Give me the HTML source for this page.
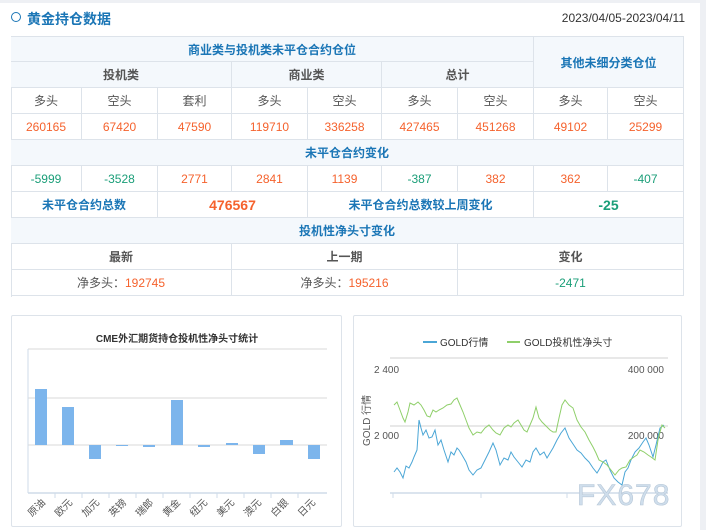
<!DOCTYPE html>
<html><head><meta charset="utf-8"><style>
*{margin:0;padding:0;box-sizing:border-box}
body{width:706px;height:530px;background:#eef0f4;position:relative;overflow:hidden;font-family:"Liberation Sans","Noto Sans CJK SC",sans-serif;font-size:12px;color:#555}
#page{position:absolute;left:0;top:3px;width:700px;height:527px;background:#fff}
.c{position:absolute;border-right:1px solid #dde3ea;border-bottom:1px solid #dde3ea;display:flex;align-items:center;justify-content:center;white-space:nowrap}
.h{background:#f4f8fc;color:#1b76b6;font-weight:bold}
.h2{background:#f4f8fc;color:#555;font-weight:bold}
.o{color:#f5622d}.g{color:#1a9e78}.b{color:#1b76b6;font-weight:bold}
.panel{position:absolute;border:1px solid #dde3ea;border-radius:2px;background:#fff}
</style></head><body>
<div id="page"></div>
<div style="position:absolute;left:11px;top:12px;width:10px;height:10px;border:1.5px solid #1b76b6;border-radius:50%"></div>
<div style="position:absolute;left:27px;top:9px;font-size:14px;font-weight:bold;color:#1b76b6">黄金持仓数据</div>
<div style="position:absolute;right:21px;top:11px;font-size:12px;color:#333">2023/04/05-2023/04/11</div>
<div style="position:absolute;left:11px;top:36px;width:673px;height:261px;border-top:1px solid #dde3ea;border-left:1px solid #dde3ea"></div>
<div class="c h" style="left:11px;top:37px;width:523px;height:25px">商业类与投机类未平仓合约仓位</div>
<div class="c h" style="left:534px;top:37px;width:150px;height:51px">其他未细分类仓位</div>
<div class="c h2" style="left:11px;top:62px;width:221px;height:26px">投机类</div>
<div class="c h2" style="left:232px;top:62px;width:150px;height:26px">商业类</div>
<div class="c h2" style="left:382px;top:62px;width:152px;height:26px">总计</div>
<div class="c" style="left:11px;top:88px;width:71px;height:26px">多头</div>
<div class="c" style="left:82px;top:88px;width:76px;height:26px">空头</div>
<div class="c" style="left:158px;top:88px;width:74px;height:26px">套利</div>
<div class="c" style="left:232px;top:88px;width:76px;height:26px">多头</div>
<div class="c" style="left:308px;top:88px;width:74px;height:26px">空头</div>
<div class="c" style="left:382px;top:88px;width:76px;height:26px">多头</div>
<div class="c" style="left:458px;top:88px;width:76px;height:26px">空头</div>
<div class="c" style="left:534px;top:88px;width:74px;height:26px">多头</div>
<div class="c" style="left:608px;top:88px;width:76px;height:26px">空头</div>
<div class="c o" style="left:11px;top:114px;width:71px;height:26px">260165</div>
<div class="c o" style="left:82px;top:114px;width:76px;height:26px">67420</div>
<div class="c o" style="left:158px;top:114px;width:74px;height:26px">47590</div>
<div class="c o" style="left:232px;top:114px;width:76px;height:26px">119710</div>
<div class="c o" style="left:308px;top:114px;width:74px;height:26px">336258</div>
<div class="c o" style="left:382px;top:114px;width:76px;height:26px">427465</div>
<div class="c o" style="left:458px;top:114px;width:76px;height:26px">451268</div>
<div class="c o" style="left:534px;top:114px;width:74px;height:26px">49102</div>
<div class="c o" style="left:608px;top:114px;width:76px;height:26px">25299</div>
<div class="c h" style="left:11px;top:140px;width:673px;height:26px">未平仓合约变化</div>
<div class="c g" style="left:11px;top:166px;width:71px;height:26px">-5999</div>
<div class="c g" style="left:82px;top:166px;width:76px;height:26px">-3528</div>
<div class="c o" style="left:158px;top:166px;width:74px;height:26px">2771</div>
<div class="c o" style="left:232px;top:166px;width:76px;height:26px">2841</div>
<div class="c o" style="left:308px;top:166px;width:74px;height:26px">1139</div>
<div class="c g" style="left:382px;top:166px;width:76px;height:26px">-387</div>
<div class="c o" style="left:458px;top:166px;width:76px;height:26px">382</div>
<div class="c o" style="left:534px;top:166px;width:74px;height:26px">362</div>
<div class="c g" style="left:608px;top:166px;width:76px;height:26px">-407</div>
<div class="c b" style="left:11px;top:192px;width:147px;height:26px">未平仓合约总数</div>
<div class="c o" style="left:158px;top:192px;width:150px;height:26px;font-size:14px;font-weight:bold">476567</div>
<div class="c b" style="left:308px;top:192px;width:226px;height:26px">未平仓合约总数较上周变化</div>
<div class="c g" style="left:534px;top:192px;width:150px;height:26px;font-size:14px;font-weight:bold">-25</div>
<div class="c h" style="left:11px;top:218px;width:673px;height:26px">投机性净头寸变化</div>
<div class="c" style="left:11px;top:244px;width:221px;height:26px;font-weight:bold">最新</div>
<div class="c" style="left:232px;top:244px;width:226px;height:26px;font-weight:bold">上一期</div>
<div class="c" style="left:458px;top:244px;width:226px;height:26px;font-weight:bold">变化</div>
<div class="c" style="left:11px;top:270px;width:221px;height:26px">净多头：<span class="o">192745</span></div>
<div class="c" style="left:232px;top:270px;width:226px;height:26px">净多头：<span class="o">195216</span></div>
<div class="c g" style="left:458px;top:270px;width:226px;height:26px">-2471</div>

<div class="panel" style="left:11px;top:315px;width:331px;height:212px"></div>
<div class="panel" style="left:353px;top:315px;width:329px;height:212px"></div>
<svg style="position:absolute;left:0;top:0" width="706" height="530" font-family="Liberation Sans,Noto Sans CJK SC,sans-serif">
<text x="177" y="342" font-size="10" font-weight="bold" fill="#333" text-anchor="middle">CME外汇期货持仓投机性净头寸统计</text>
<g stroke="#e6e6e6" stroke-width="1.5"><line x1="28" y1="349" x2="327" y2="349"/><line x1="28" y1="398" x2="327" y2="398"/><line x1="28" y1="445" x2="327" y2="445"/></g>
<line x1="28" y1="349" x2="28" y2="493" stroke="#cfdbe8"/>
<line x1="28" y1="493" x2="327" y2="493" stroke="#cfdbe8" stroke-width="1.5"/>
<g stroke="#cfdbe8"><line x1="55" y1="493" x2="55" y2="498"/><line x1="82" y1="493" x2="82" y2="498"/><line x1="109" y1="493" x2="109" y2="498"/><line x1="136" y1="493" x2="136" y2="498"/><line x1="163" y1="493" x2="163" y2="498"/><line x1="190" y1="493" x2="190" y2="498"/><line x1="217" y1="493" x2="217" y2="498"/><line x1="244" y1="493" x2="244" y2="498"/><line x1="271" y1="493" x2="271" y2="498"/><line x1="298" y1="493" x2="298" y2="498"/></g>
<g fill="#7cb5ec">
<rect x="35" y="389" width="12" height="56"/><rect x="62" y="407" width="12" height="38"/><rect x="89" y="445" width="12" height="14"/>
<rect x="116" y="445" width="12" height="1"/><rect x="143" y="445" width="12" height="2"/><rect x="171" y="400" width="12" height="45"/>
<rect x="198" y="445" width="12" height="2"/><rect x="226" y="443" width="12" height="2"/><rect x="253" y="445" width="12" height="9"/>
<rect x="280" y="440" width="13" height="5"/><rect x="308" y="445" width="12" height="14"/></g>
<g font-size="10" fill="#555" text-anchor="end">
<text transform="translate(46,503) rotate(-45)">原油</text><text transform="translate(73,503) rotate(-45)">欧元</text><text transform="translate(100,503) rotate(-45)">加元</text><text transform="translate(127,503) rotate(-45)">英镑</text><text transform="translate(154,503) rotate(-45)">瑞郎</text><text transform="translate(181,503) rotate(-45)">黄金</text><text transform="translate(208,503) rotate(-45)">纽元</text><text transform="translate(235,503) rotate(-45)">美元</text><text transform="translate(262,503) rotate(-45)">澳元</text><text transform="translate(289,503) rotate(-45)">白银</text><text transform="translate(316,503) rotate(-45)">日元</text></g>

<line x1="423" y1="342" x2="437" y2="342" stroke="#4ba6d6" stroke-width="2"/>
<text x="440" y="346" font-size="10" fill="#333">GOLD行情</text>
<line x1="507" y1="342" x2="520" y2="342" stroke="#8fcf6a" stroke-width="2"/>
<text x="524" y="346" font-size="10" fill="#333">GOLD投机性净头寸</text>
<g stroke="#e0e0e0" stroke-width="1.5"><line x1="390" y1="358" x2="668" y2="358"/><line x1="390" y1="426" x2="668" y2="426"/></g>
<line x1="390" y1="493" x2="668" y2="493" stroke="#cfdbe8" stroke-width="1.5"/>
<g stroke="#cfdbe8"><line x1="393" y1="493" x2="393" y2="498"/><line x1="481" y1="493" x2="481" y2="498"/><line x1="567" y1="493" x2="567" y2="498"/></g>
<g font-size="10" fill="#555"><text x="374" y="373">2 400</text><text x="374" y="439">2 000</text><text x="664" y="373" text-anchor="end">400 000</text><text x="664" y="439" text-anchor="end">200 000</text>
<text transform="translate(370,446) rotate(-90)">GOLD 行情</text></g>
<polyline fill="none" stroke="#4ba6d6" stroke-width="1" points="394,472 397,468 400,472 403,478 406,466 409,468 412,462 414,457 417,450 419,420 421,428 423,435 426,430 429,438 432,437 435,430 438,445 441,440 444,450 448,462 451,452 454,455 457,448 459,450 462,455 466,462 469,470 473,475 477,470 481,468 485,460 489,452 493,443 496,450 500,465 504,458 508,460 511,452 514,457 518,462 522,467 526,460 530,462 533,452 536,448 540,455 544,452 547,458 550,453 553,448 557,440 561,433 565,428 569,438 573,444 577,450 581,453 585,458 589,462 593,468 597,473 600,468 603,462 606,460 610,470 614,478 618,482 622,485 625,472 628,468 631,460 635,452 639,448 643,442 646,438 649,445 653,457 656,445 660,428 664,425"/>
<polyline fill="none" stroke="#8fcf6a" stroke-width="1" points="394,405 397,402 400,410 403,418 405,422 408,412 410,403 414,405 418,402 421,405 424,410 427,416 430,417 433,410 436,412 439,410 443,408 447,405 451,404 454,400 457,398 460,405 463,412 466,420 469,428 473,435 477,432 481,433 485,428 489,425 493,430 496,433 500,435 504,428 508,425 511,427 514,423 518,420 521,425 524,430 527,432 530,425 533,418 536,407 539,418 542,422 545,425 547,427 550,430 553,432 556,432 559,418 562,405 565,400 569,405 573,408 577,420 581,427 585,432 589,440 593,447 596,453 599,460 603,462 607,465 611,470 615,475 619,470 622,468 626,467 630,460 634,457 637,455 640,450 644,452 648,455 651,457 655,460 658,440 660,432 662,425 665,428"/>
<text x="577" y="505" font-size="30" fill="#cfdeec" stroke="#b8c8d8" stroke-width="0.6" letter-spacing="1">FX678</text>
</svg>
</body></html>
